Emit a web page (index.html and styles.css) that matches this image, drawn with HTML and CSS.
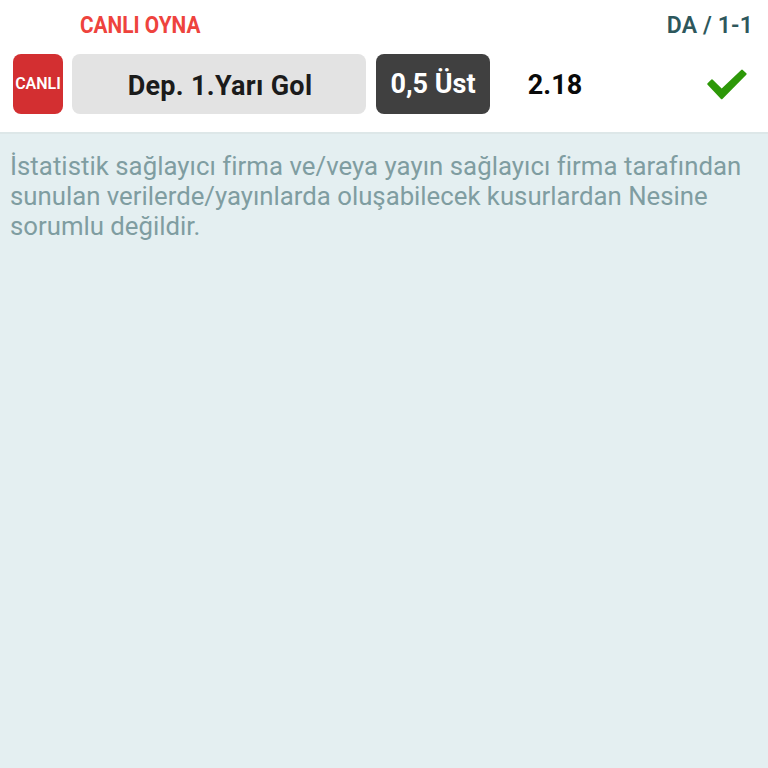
FILE: index.html
```html
<!DOCTYPE html>
<html lang="tr">
<head>
<meta charset="utf-8">
<title>Kupon</title>
<link rel="stylesheet" href="styles.css">
</head>
<body>
<main class="card">
  <header class="top"><span class="live-play">CANLI OYNA</span><span class="score">DA / 1-1</span></header>
  <section class="bet">
    <span class="live">CANLI</span>
    <span class="market">Dep. 1.Yarı Gol</span>
    <span class="pick">0,5 Üst</span>
    <span class="odds">2.18</span>
    <svg class="check" viewBox="0 0 40 32" width="40" height="32" aria-hidden="true"><path d="M.6 15.2 4.4 11.6Q5.1 11 5.8 11.7L14.7 20.6 34.2 1.9Q35 1.1 35.8 1.9L39.3 5.3Q40 6 39.3 6.7L15.4 31Q14.7 31.7 14 31L.6 16.7Q-.1 15.9.6 15.2Z"/></svg>
  </section>
</main>
<p class="note"><span class="line first">İstatistik sağlayıcı firma ve/veya yayın sağlayıcı firma tarafından</span> <span class="line">sunulan verilerde/yayınlarda oluşabilecek kusurlardan Nesine</span> <span class="line">sorumlu değildir.</span></p>
</body>
</html>
```

FILE: styles.css
```css
* { box-sizing: border-box; }
body { margin: 0; min-height: 768px; background: #e4eff1; font-family: Roboto, sans-serif; }
.card { height: 134px; background: #fff; border-bottom: 2px solid #dde7e8; }
.top { display: flex; justify-content: space-between; height: 54px; padding: 10px 15px 0 80px; font-size: 23px; line-height: 31px; font-weight: 700; }
.live-play { color: #ee433d; transform: scaleX(.905); transform-origin: left; }
.score { color: #2d575c; font-weight: 600; letter-spacing: .15px; }
.bet { display: flex; align-items: center; height: 60px; padding-left: 13px; font-weight: 600; white-space: nowrap; }
.bet > span { display: flex; align-items: center; justify-content: center; height: 60px; border-radius: 8px; }
.live { width: 50px; background: #d32f31; color: #fff; font-size: 16px; padding-bottom: 2px; }
.market { width: 294px; margin-left: 9px; background: #e3e3e3; color: #1b1b1b; font-size: 27px; font-weight: 700; letter-spacing: .3px; padding: 3px 0 0 2px; }
.pick { width: 114px; margin-left: 10px; background: #404040; color: #fff; font-size: 27px; font-weight: 700; }
.odds { width: 56px; margin-left: 37px; color: #090909; font-size: 27px; font-weight: 700; padding-top: 1px; }
.check { margin: 0 21px 0 auto; fill: #2d9808; }
.note { margin: 0; padding: 17px 10px; color: #7f9da1; font-size: 25.75px; line-height: 30px; font-variant-ligatures: none; }
.line { display: block; width: max-content; white-space: nowrap; }
.first { letter-spacing: .04px; }
```
